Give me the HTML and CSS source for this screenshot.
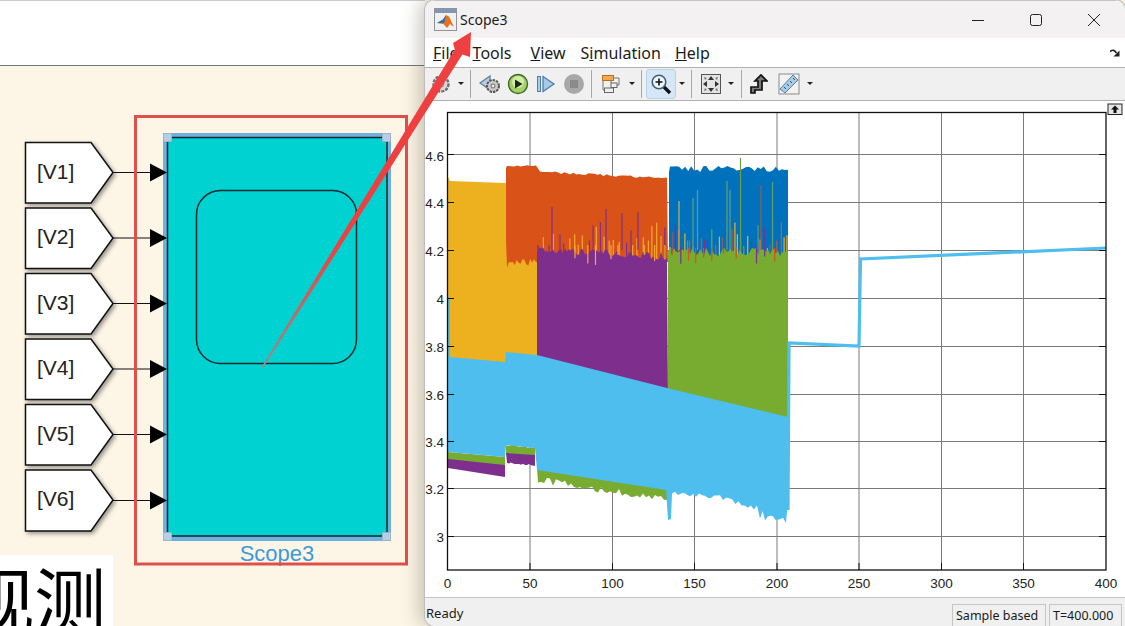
FILE: index.html
```html
<!DOCTYPE html>
<html>
<head>
    <meta charset="UTF-8">
    <title>Scope3</title>
    <link rel="stylesheet" href="styles.css">
</head>
<body>
    <div id="desktop">
        <div class="model">
            <div class="model-top"></div>
            <div class="model-canvas">
                <svg class="diagram" width="425" height="560" viewBox="0 66 425 560">
                    <g class="goto-blocks">
                        <path d="M25.5 142.5H91L113 172.5L91 203H25.5Z"/>
                        <path d="M25.5 208H91L113 238L91 268.5H25.5Z"/>
                        <path d="M25.5 273.5H91L113 303.5L91 334H25.5Z"/>
                        <path d="M25.5 339H91L113 369L91 399.5H25.5Z"/>
                        <path d="M25.5 404.5H91L113 434.5L91 465H25.5Z"/>
                        <path d="M25.5 470H91L113 500L91 531H25.5Z"/>
                    </g>
                    <text class="goto-label" x="37" y="179">[V1]</text>
                    <text class="goto-label" x="37" y="244">[V2]</text>
                    <text class="goto-label" x="37" y="310">[V3]</text>
                    <text class="goto-label" x="37" y="375">[V4]</text>
                    <text class="goto-label" x="37" y="441">[V5]</text>
                    <text class="goto-label" x="37" y="506">[V6]</text>

                    <path class="wire" d="M113 172.5H152M113 238H152M113 303.5H152M113 369H152M113 434.5H152M113 500.5H152"/>

                    <rect class="selection" x="163" y="133" width="228" height="408"/>
                    <rect class="scope-body" x="167.5" y="137.5" width="219.5" height="398.5"/>
                    <rect class="scope-screen" x="196.5" y="190.5" width="160" height="173" rx="24"/>
                    <path class="port" d="M150 163.5L167 172.5L150 181.5ZM150 229L167 238L150 247ZM150 294.5L167 303.5L150 312.5ZM150 360L167 369L150 378ZM150 425.5L167 434.5L150 443.5ZM150 491.5L167 500.5L150 509.5Z"/>
                    <g class="handle">
                        <rect x="163.5" y="133.5" width="8" height="8"/>
                        <rect x="382.5" y="133.5" width="8" height="8"/>
                        <rect x="163.5" y="532.5" width="8" height="8"/>
                        <rect x="382.5" y="532.5" width="8" height="8"/>
                    </g>
                    <text class="scope-name" x="277" y="561">Scope3</text>
                    <rect class="callout" x="135.5" y="116.5" width="271" height="447.5"/>
                </svg>
                <div class="note"><span>观测</span></div>
            </div>
        </div>

        <div class="scope-window">
            <div class="title-bar">
                <svg class="app-icon" width="23" height="23" viewBox="0 0 23 23">
                    <rect x="0.5" y="0.5" width="22" height="22" fill="#eef0f2" stroke="#8f9499"/>
                    <rect x="1" y="1" width="21" height="4" fill="#7f97b5"/>
                    <path d="M3 15L9 11.5L12 7L15 8.5L20 19L16 16L13 20L9 15.5Z" fill="#e8701f"/>
                    <path d="M3 15L9 11.5L12 7L10.5 14L9 15.5Z" fill="#2f6fa8"/>
                </svg>
                <span class="title-text">Scope3</span>
                <div class="window-buttons">
                    <div class="window-button">
                        <svg width="14" height="14" viewBox="0 0 14 14"><path d="M1 7.5H13" stroke="#222" fill="none"/></svg>
                    </div>
                    <div class="window-button">
                        <svg width="14" height="14" viewBox="0 0 14 14"><rect x="1.5" y="1.5" width="11" height="11" rx="2" stroke="#222" fill="none"/></svg>
                    </div>
                    <div class="window-button">
                        <svg width="14" height="14" viewBox="0 0 14 14"><path d="M1 1L13 13M13 1L1 13" stroke="#222" fill="none"/></svg>
                    </div>
                </div>
            </div>

            <div class="menu-bar">
                <span class="menu-item menu-file"><u>F</u>ile</span>
                <span class="menu-item menu-tools"><u>T</u>ools</span>
                <span class="menu-item menu-view"><u>V</u>iew</span>
                <span class="menu-item menu-sim">S<u>i</u>mulation</span>
                <span class="menu-item menu-help"><u>H</u>elp</span>
                <svg class="dock-arrow" width="10" height="8" viewBox="0 0 10 8">
                    <path d="M0 2.5C3 0.5 4.5 1 6.5 4" stroke="#222" stroke-width="1.6" fill="none"/>
                    <path d="M9.5 1.5V7.5H3.5Z" fill="#222"/>
                </svg>
            </div>

            <div class="tool-bar">
                <div class="tool t-gear">
                    <svg width="20" height="20" viewBox="0 0 20 20">
                        <circle cx="10" cy="10" r="7.5" fill="#d9d9d9" stroke="#6d6d6d" stroke-width="2.4" stroke-dasharray="3 1.2"/>
                        <circle cx="10" cy="10" r="3" fill="#f0f0f0" stroke="#8a8a8a"/>
                    </svg>
                </div>
                <div class="caret c-gear"></div>
                <div class="sep s-1"></div>
                <div class="tool t-back">
                    <svg width="22" height="22" viewBox="0 0 22 22">
                        <path d="M1 10L11 3V17Z" fill="#b9cde0" stroke="#5f7d9c" stroke-width="1.3"/>
                        <circle cx="14" cy="13" r="6" fill="#c9c9c9" stroke="#555" stroke-width="2" stroke-dasharray="2.4 1"/>
                        <circle cx="14" cy="13" r="2" fill="#f0f0f0" stroke="#666"/>
                    </svg>
                </div>
                <div class="tool">
                    <svg width="22" height="22" viewBox="0 0 22 22">
                        <circle cx="11" cy="11" r="9.5" fill="#a5d06a" stroke="#3c6a22" stroke-width="1.4"/>
                        <circle cx="11" cy="9" r="6" fill="#d3ecaa"/>
                        <path d="M8 6.5L15.5 11L8 15.5Z" fill="#1c2a14"/>
                    </svg>
                </div>
                <div class="tool">
                    <svg width="20" height="20" viewBox="0 0 20 20">
                        <rect x="1.5" y="2.5" width="3" height="15" fill="#a9c9e6" stroke="#4f7fae"/>
                        <path d="M7 2.5L18 10L7 17.5Z" fill="#a9c9e6" stroke="#4f7fae" stroke-width="1.3"/>
                    </svg>
                </div>
                <div class="tool">
                    <svg width="22" height="22" viewBox="0 0 22 22">
                        <circle cx="11" cy="11" r="10" fill="#a8a8a8"/>
                        <rect x="7" y="7" width="8" height="8" fill="#8a8a8a"/>
                    </svg>
                </div>
                <div class="sep s-2"></div>
                <div class="tool t-blocks">
                    <svg width="22" height="22" viewBox="0 0 22 22">
                        <path d="M3 6V17H7M14 5H19V12H17M11 8V10" stroke="#777" fill="none"/>
                        <rect x="2.5" y="2.5" width="11" height="5" fill="#f3a84c" stroke="#b8701e"/>
                        <rect x="11" y="10" width="6" height="4.500" fill="#f0f0f0" stroke="#666"/>
                        <rect x="4.500" y="15" width="9" height="4.500" fill="#f0f0f0" stroke="#666"/>
                    </svg>
                </div>
                <div class="caret c-small"></div>
                <div class="sep s-3"></div>
                <div class="tool t-zoom">
                    <svg width="22" height="22" viewBox="0 0 22 22">
                        <path d="M13.5 13.5L20 20" stroke="#111" stroke-width="3.4"/>
                        <circle cx="9" cy="9" r="6.8" fill="#eef5fb" stroke="#40607a" stroke-width="1.6"/>
                        <path d="M5.5 9H12.5M9 5.5V12.5" stroke="#111" stroke-width="1.6"/>
                    </svg>
                </div>
                <div class="caret c-small"></div>
                <div class="sep s-3"></div>
                <div class="tool t-fit">
                    <svg width="22" height="22" viewBox="0 0 22 22">
                        <rect x="1.5" y="1.5" width="19" height="19" fill="#e4e4e4" stroke="#555"/>
                        <path d="M11 3L14 7H8ZM11 19L14 15H8ZM3 11L7 8V14ZM19 11L15 8V14Z" fill="#333"/>
                        <path d="M4 4L7 5L5 7ZM18 4L15 5L17 7ZM4 18L7 17L5 15ZM18 18L15 17L17 15Z" fill="#777"/>
                    </svg>
                </div>
                <div class="caret c-small"></div>
                <div class="sep s-4"></div>
                <div class="tool t-step">
                    <svg width="20" height="22" viewBox="0 0 20 22">
                        <path d="M3 20V14H10V8H7L13 2L19 8H14V17H7V20Z" fill="#7a7a7a" stroke="#111" stroke-width="1.7"/>
                    </svg>
                </div>
                <div class="tool t-ruler">
                    <svg width="22" height="22" viewBox="0 0 22 22">
                        <rect x="1" y="1" width="20" height="20" fill="#f2f2f2" stroke="#8a8a8a"/>
                        <path d="M2 16L15 2L20 7L7 20Z" fill="#a9cbe6" stroke="#527fa6"/>
                        <path d="M6 14L8 16M9 11L11 13M12 8L14 10M15 5L17 7" stroke="#35566f"/>
                    </svg>
                </div>
                <div class="caret c-ruler"></div>
            </div>

            <div class="plot">
                <svg id="scope-plot" width="700" height="496" viewBox="425 101 700 496">
                    <path class="grid" d="M530 112.5V570M612.5 112.5V570M694.5 112.5V570M777 112.5V570M859 112.5V570M941.500 112.5V570M1023.5 112.5V570M447.5 154.500H1106M447.5 202.500H1106M447.5 250.500H1106M447.5 298.500H1106M447.5 346.500H1106M447.5 394.500H1106M447.5 441.500H1106M447.5 488.500H1106M447.5 536.500H1106"/>
                    <g id="traces"></g>
                    <rect class="axes" x="447.5" y="112.5" width="658.500" height="457.500"/>
                    <path class="ticks" d="M530 570V563M612.500 570V563M694.500 570V563M777 570V563M859 570V563M941.500 570V563M1023.500 570V563M447.500 154.500H454M447.500 202.500H454M447.500 250.500H454M447.500 298.500H454M447.500 346.500H454M447.500 394.500H454M447.500 441.500H454M447.500 488.500H454M447.500 536.500H454M1106 154.500H1099M1106 202.500H1099M1106 250.500H1099M1106 298.500H1099M1106 346.500H1099M1106 394.500H1099M1106 441.500H1099M1106 488.500H1099M1106 536.500H1099"/>
                    <g class="y-labels">
                        <text x="444" y="161">4.6</text>
                        <text x="444" y="208">4.4</text>
                        <text x="444" y="256">4.2</text>
                        <text x="444" y="304">4</text>
                        <text x="444" y="352">3.8</text>
                        <text x="444" y="400">3.6</text>
                        <text x="444" y="447">3.4</text>
                        <text x="444" y="494">3.2</text>
                        <text x="444" y="542">3</text>
                    </g>
                    <g class="x-labels">
                        <text x="447.500" y="588">0</text>
                        <text x="530" y="588">50</text>
                        <text x="612.500" y="588">100</text>
                        <text x="694.500" y="588">150</text>
                        <text x="777" y="588">200</text>
                        <text x="859" y="588">250</text>
                        <text x="941.500" y="588">300</text>
                        <text x="1023.500" y="588">350</text>
                        <text x="1106" y="588">400</text>
                    </g>
                    <g class="undock">
                        <rect x="1108" y="104" width="14" height="10.500"/>
                        <path d="M1115 105.500L1119 109.500H1116.500V113H1113.500V109.500H1111Z"/>
                    </g>
                </svg>
            </div>

            <div class="status-bar">
                <span class="status-text">Ready</span>
                <span class="status-box box-sample">Sample based</span>
                <span class="status-box box-time">T=400.000</span>
            </div>
        </div>

        <svg class="annotation" width="1125" height="626" viewBox="0 0 1125 626">
            <defs>
                <linearGradient id="arrow-fade" gradientUnits="userSpaceOnUse" x1="262" y1="367" x2="340" y2="245">
                    <stop offset="0" stop-color="#9c8a8a"/>
                    <stop offset="1" stop-color="#ee4040"/>
                </linearGradient>
            </defs>
            <path fill="url(#arrow-fade)" d="M261.500 367L454.800 49.600L453 43L471 32L470 57L462.400 54.400L263 368Z"/>
        </svg>
    </div>

    <script src="plot.js"></script>
</body>
</html>
```

FILE: styles.css
```css
* {
    margin: 0;
    padding: 0;
    box-sizing: border-box;
}

body {
    font-family: 'Liberation Sans', Arial, sans-serif;
    overflow: hidden;
}

#desktop {
    position: relative;
    display: flex;
    width: 1125px;
    height: 626px;
    overflow: hidden;
    background-color: #fdf5e6;
}

/* simulink side */
.model {
    display: flex;
    flex-direction: column;
    width: 425px;
    flex-shrink: 0;
}

.model-top {
    height: 66px;
    flex-shrink: 0;
    background-color: #fff;
    border-top: 1px solid #ccc;
    border-bottom: 1px solid #777;
}

.model-canvas {
    position: relative;
    flex-grow: 1;
}

.diagram {
    display: block;
}

.goto-blocks path {
    fill: #fff;
    stroke: #111;
    stroke-width: 1.5;
    filter: drop-shadow(2px 2px 2px rgba(0, 0, 0, 0.4));
}

.goto-label {
    font-size: 21px;
    fill: #222;
}

.wire {
    fill: none;
    stroke: #111;
    stroke-width: 1.2;
}

.port {
    fill: #000;
}

.selection {
    fill: #6fb0df;
}

.scope-body {
    fill: #00d2d2;
    stroke: #10282c;
    stroke-width: 1.5;
}

.scope-screen {
    fill: none;
    stroke: #0c2a2c;
    stroke-width: 1.5;
}

.handle rect {
    fill: #b3d0e8;
    stroke: #9db4c6;
}

.scope-name {
    font-size: 22px;
    fill: #3b9bd8;
    text-anchor: middle;
}

.callout {
    fill: none;
    stroke: #e0504a;
    stroke-width: 3;
}

.note {
    position: absolute;
    left: 0;
    top: 489px;
    width: 113px;
    height: 71px;
    overflow: hidden;
    background-color: #fff;
    white-space: nowrap;
}

.note span {
    display: block;
    margin-left: -38px;
    font-family: 'Noto Sans CJK SC', sans-serif;
    font-size: 72px;
    line-height: 84px;
    color: #000;
}

/* scope window */
.scope-window {
    position: relative;
    display: flex;
    flex-direction: column;
    width: 700px;
    flex-shrink: 0;
    overflow: hidden;
    background-color: #fff;
    border-radius: 10px 10px 0 10px;
    box-shadow: 0 0 0 1px #bdbdbd, -6px 0 18px rgba(70, 60, 40, 0.28);
    color: #1a1a1a;
}

.title-bar {
    display: flex;
    align-items: center;
    height: 38px;
    flex-shrink: 0;
    padding-left: 9px;
    background-color: #f3f1f1;
    border-top: 1px solid #c4c4c4;
}

.app-icon {
    flex-shrink: 0;
}

.title-text {
    margin-left: 3px;
    font-family: 'Noto Sans', sans-serif;
    font-size: 14px;
}

.window-buttons {
    display: flex;
    margin-left: auto;
    margin-right: 2px;
}

.window-button {
    display: flex;
    align-items: center;
    justify-content: center;
    width: 58px;
    height: 36px;
}

.menu-bar {
    position: relative;
    display: flex;
    align-items: center;
    height: 30px;
    flex-shrink: 0;
    background-color: #fff;
    border-bottom: 1px solid #b0b0b0;
    font-family: 'Noto Sans', sans-serif;
    font-size: 16px;
}

.menu-file { margin-left: 8px; }
.menu-tools { margin-left: 14px; }
.menu-view { margin-left: 19px; }
.menu-sim { margin-left: 15px; }
.menu-help { margin-left: 14px; }

.dock-arrow {
    margin-left: auto;
    margin-right: 5px;
}

.tool-bar {
    display: flex;
    align-items: center;
    height: 33px;
    flex-shrink: 0;
    padding-left: 5px;
    background-color: #f0f0f0;
    border-bottom: 1px solid #b0b0b0;
}

.tool {
    display: flex;
    align-items: center;
    justify-content: center;
    width: 28px;
    height: 28px;
    flex-shrink: 0;
}

.t-gear { width: 22px; }
.t-back { margin-left: 5px; }
.t-blocks { width: 30px; margin-left: 4px; }
.t-zoom {
    width: 30px;
    height: 30px;
    margin-left: 4px;
    background-color: #d5e7f7;
    border: 1px solid #b7d3ea;
    border-radius: 3px;
}
.t-fit { margin-left: 5px; }
.t-step { margin-left: 2px; }
.t-ruler { margin-left: 3px; }

.caret {
    position: relative;
    width: 12px;
    height: 28px;
    flex-shrink: 0;
}

.caret::after {
    content: '';
    position: absolute;
    left: 50%;
    top: 12px;
    margin-left: -3px;
    border-left: 3px solid transparent;
    border-right: 3px solid transparent;
    border-top: 3px solid #222;
}

.c-gear { width: 18px; }
.c-ruler { width: 14px; }

.sep {
    width: 1px;
    height: 28px;
    flex-shrink: 0;
    background-color: #a8a8a8;
}

.s-2 { margin-left: 3px; }
.s-3 { margin-left: 3px; }
.s-4 { margin-left: 4px; }

.plot {
    flex-grow: 1;
    background-color: #fff;
}

#scope-plot {
    display: block;
}

.grid {
    fill: none;
    stroke: #7a7a7a;
    stroke-width: 1;
}

.axes {
    fill: none;
    stroke: #111;
    stroke-width: 1.300;
}

.ticks {
    fill: none;
    stroke: #111;
    stroke-width: 1;
}

.y-labels text,
.x-labels text {
    font-size: 13.500px;
    fill: #222;
}

.y-labels text { text-anchor: end; }
.x-labels text { text-anchor: middle; }

.undock rect {
    fill: #e6e6e6;
    stroke: #222;
}

.undock path {
    fill: #111;
}

.status-bar {
    display: flex;
    align-items: stretch;
    height: 29px;
    flex-shrink: 0;
    padding-top: 6px;
    background-color: #f0f0f0;
    border-top: 1px solid #c4c4c4;
    font-family: 'Noto Sans', sans-serif;
    font-size: 13px;
}

.status-text {
    flex-grow: 1;
    padding-left: 1px;
    line-height: 19px;
}

.status-box {
    height: 23px;
    padding-left: 3px;
    border: 1px solid #c6c6c6;
    border-bottom: none;
    font-size: 12.500px;
    line-height: 21px;
    white-space: nowrap;
}

.box-sample { width: 94px; }
.box-time { width: 73px; margin-left: 3px; margin-right: 3px; }

.annotation {
    position: absolute;
    left: 0;
    top: 0;
    pointer-events: none;
}
```

FILE: plot.js
```js
// fake scope data, seeded so the picture stays the same between loads
let seed = 20231;

function rnd() {
    seed = (seed + 0x6d2b79f5) | 0;
    let t = Math.imul(seed ^ (seed >>> 15), 1 | seed);
    t = (t + Math.imul(t ^ (t >>> 7), 61 | t)) ^ t;
    return ((t ^ (t >>> 14)) >>> 0) / 4294967296;
}

// noisy edge from (x0,y0) to (x1,y1)
function edge(x0, y0, x1, y1, step, amp) {
    const pts = [];
    const n = Math.round(Math.abs(x1 - x0) / step);
    for (let i = 0; i <= n; i++) {
        const k = i / n;
        const y = y0 + (y1 - y0) * k + (rnd() - 0.5) * amp;
        pts.push((x0 + (x1 - x0) * k).toFixed(1) + ',' + y.toFixed(1));
    }
    return pts;
}

const traces = document.getElementById('traces');
const NS = 'http://www.w3.org/2000/svg';

function poly(color, pts) {
    const el = document.createElementNS(NS, 'polygon');
    el.setAttribute('fill', color);
    el.setAttribute('points', pts.join(' '));
    traces.appendChild(el);
}

function spike(color, x, y0, y1) {
    const el = document.createElementNS(NS, 'path');
    el.setAttribute('d', `M${x} ${y0}V${y1}`);
    el.setAttribute('stroke', color);
    el.setAttribute('stroke-width', '1.2');
    traces.appendChild(el);
}

const YELLOW = '#edb120';
const ORANGE = '#d95319';
const PURPLE = '#7e2f8e';
const GREEN = '#77ac30';
const LIGHT = '#4dbeee';
const BLUE = '#0072bd';

// 0-35 s
poly(YELLOW, ['448,177', '450,181', '505,183', '537,183', '537,420', '448,420']);
poly(ORANGE, [
    '506,168', '507,166',
    ...edge(508, 166, 536, 166, 3, 1.5),
    ...edge(540, 172, 667, 178, 3, 2.5),
    '668,262', '537,262',
    ...edge(536, 262, 507, 264, 2, 9),
    '506,240'
]);

// 55-135 s
for (let x = 538; x < 667; x += 3 + rnd() * 5) {
    const c = rnd() < 0.7 ? '#f0a830' : PURPLE;
    spike(c, x.toFixed(1), 262, 222 + rnd() * 26);
}
spike(PURPLE, 552, 250, 207);
spike(PURPLE, 606, 250, 209);
spike(PURPLE, 622, 250, 213);
spike(PURPLE, 638, 250, 212);
poly(PURPLE, [
    ...edge(537, 250, 667, 256, 2, 8),
    '668,400', '537,400'
]);
for (let x = 575; x < 667; x += 7 + rnd() * 10) {
    spike('#f0a830', x.toFixed(1), 245, 255 + rnd() * 10);
}

// 135-207 s
poly(BLUE, [
    '669,172',
    ...edge(670, 169, 788, 169, 3, 6),
    '788,265', '669,265'
]);
const mixed = ['#6aa84f', YELLOW, PURPLE, ORANGE, '#5f9a7a', '#8a5a6a', YELLOW, PURPLE];
for (let x = 670; x < 787; x += 2 + rnd() * 2.5) {
    const c = mixed[Math.floor(rnd() * mixed.length)];
    spike(c, x.toFixed(1), 262, 222 + rnd() * 30);
}
spike('#6f9f45', 740.500, 250, 158);
spike('#6f9f55', 727, 250, 181);
spike('#a05a40', 761, 250, 185);
spike('#5fa070', 772.500, 250, 182);
spike('#5fa080', 697.500, 250, 190);
spike('#5fa080', 693, 250, 198);
spike('#c9b050', 679, 250, 201);
spike('#5fa080', 730, 250, 190);
poly(GREEN, [
    ...edge(668, 252, 788, 252, 2, 9),
    '788,430', '668,400'
]);
for (let x = 672; x < 786; x += 6 + rnd() * 7) {
    spike(rnd() < 0.5 ? PURPLE : ORANGE, x.toFixed(1), 248, 252 + rnd() * 12);
}

// lower strips before the big light blue band
poly(GREEN, ['448,452', '505,457', '505,466', '448,460']);
poly(PURPLE, ['448,459', '505,465', '505,477', '448,468']);
poly(GREEN, [
    ...edge(506, 445, 535, 448, 2, 1.5),
    '535,456', '506,454'
]);
poly(PURPLE, [
    '506,453', '535,455', '535,466',
    ...edge(533, 465, 507, 463, 2, 1.5)
]);
poly(GREEN, [
    '537,468', '667,485', '667,500',
    ...edge(664, 499, 538, 480, 3, 7)
]);

// light blue trace on top
poly(LIGHT, [
    '448,297', '450,298', '450,357', '505,362', '506,352', '537,355', '667,388', '788,417',
    '788,500', '786,523',
    ...edge(783, 520, 760, 516, 2.500, 11),
    ...edge(757, 508, 720, 497, 3, 5),
    ...edge(717, 497, 672, 493, 3, 4),
    '671,519', '668,520', '666,490',
    '537,470', '535,448', '506,445', '505,457', '448,452'
]);

// single line after the samples get sparse
const line = document.createElementNS(NS, 'polyline');
line.setAttribute('points', '788,510 789,343 859,346 860.500,259 1106,248');
line.setAttribute('fill', 'none');
line.setAttribute('stroke', LIGHT);
line.setAttribute('stroke-width', '3.2');
traces.appendChild(line);
```
